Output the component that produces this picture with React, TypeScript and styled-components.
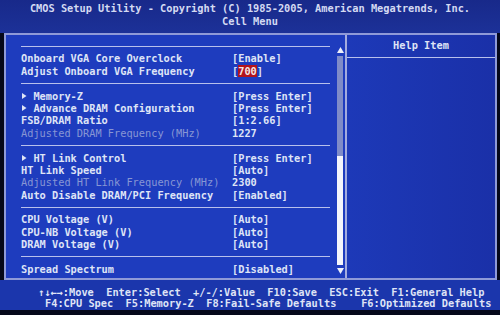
import styled, { createGlobalStyle } from "styled-components";

const GlobalStyle = createGlobalStyle`
  html, body {
    margin: 0;
    padding: 0;
    background: #000;
  }
`;

/**
 * Styles
 */
const Screen = styled.div`
  width: 500px;
  height: 315px;
  display: flex;
  flex-direction: column;
  background: #05081a;
  font-family: "DejaVu Sans Mono", "Liberation Mono", monospace;
  font-size: 10.3px;
  font-weight: bold;
  color: #dfe4f6;
  overflow: hidden;
`;
const Header = styled.div`
  height: 33px;
  box-sizing: border-box;
  padding-top: 2px;
  background: linear-gradient(#18298a, #1c3198);
  display: flex;
  flex-direction: column;
  align-items: center;
  line-height: 13px;
  color: #d4daf2;
  white-space: pre;
`;
const Frame = styled.div`
  height: 247px;
  box-sizing: border-box;
  margin: 0 3px 0 4px;
  border: 2px solid #8f9ad8;
  background: #1e3cbe;
  display: grid;
  grid-template-columns: 341px 1fr;
`;
const Menu = styled.div`
  display: grid;
  grid-template-columns: 1fr 10px;
  column-gap: 5px;
  padding: 5px 0 0 15px;
  border-right: 2px solid #a3acdf;
`;
const Rows = styled.div`
  display: flex;
  flex-direction: column;
`;
const Row = styled.div<{ $dim?: boolean }>`
  height: 12.4px;
  line-height: 12.4px;
  display: grid;
  grid-template-columns: 211px 1fr;
  white-space: pre;
  color: ${(p) => (p.$dim ? "#8796d4" : "#dfe4f6")};
  font-weight: ${(p) => (p.$dim ? "normal" : "bold")};
`;
const Label = styled.span`
  display: flex;
  align-items: center;
`;
const Value = styled.span`
  color: #dfe4f6;
  font-weight: bold;
`;
const Sep = styled.div`
  height: 12.4px;
  display: flex;
  align-items: center;
  &::after {
    content: "";
    flex: 1;
    height: 1px;
    background: #b8c0ec;
  }
`;
const Arrow = styled.svg`
  width: 12.4px;
  height: 6px;
  flex: none;
`;
const Selected = styled.span`
  background: #b3141c;
  color: #f2e6e6;
`;
const Scroll = styled.div`
  display: flex;
  flex-direction: column;
  align-items: center;
  padding: 7px 0 4px;
`;
const Track = styled.div`
  flex: 1;
  width: 6px;
  margin: 3px 0;
  display: flex;
  flex-direction: column;
`;
const TrackPart = styled.div<{ $grow: number; $color: string }>`
  flex: ${(p) => p.$grow};
  background: ${(p) => p.$color};
`;
const Help = styled.div`
  display: flex;
  flex-direction: column;
  background: linear-gradient(90deg, #1d39b8, #1a30a8);
`;
const HelpTitle = styled.div`
  height: 22px;
  line-height: 21px;
  text-align: center;
  border-bottom: 1px solid #b8c0ec;
`;
const Footer = styled.div`
  height: 30px;
  box-sizing: border-box;
  padding-top: 7px;
  background: #1b36ac;
  display: flex;
  flex-direction: column;
  line-height: 11px;
  white-space: pre;
  color: #dfe4f6;
`;
const FooterLine = styled.div<{ $indent: number }>`
  padding-left: ${(p) => p.$indent}px;
`;

const TriUp = () => (
  <svg width="7" height="6" viewBox="0 0 7 6">
    <path d="M3.5 0 L7 6 L0 6 Z" fill="#eef0fa" />
  </svg>
);
const TriDown = () => (
  <svg width="7" height="6" viewBox="0 0 7 6">
    <path d="M0 0 L7 0 L3.5 6 Z" fill="#eef0fa" />
  </svg>
);
const TriRight = () => (
  <Arrow viewBox="0 0 12.4 6">
    <path d="M1 0 L5.5 3 L1 6 Z" fill="#dfe4f6" />
  </Arrow>
);

type Item =
  | { sep: true }
  | { label: string; value?: React.ReactNode; sub?: boolean; dim?: boolean };

const items: Item[] = [
  { sep: true },
  { label: "Onboard VGA Core Overclock", value: "[Enable]" },
  {
    label: "Adjust Onboard VGA Frequency",
    value: (
      <>
        [<Selected>700</Selected>]
      </>
    ),
  },
  { sep: true },
  { label: "Memory-Z", value: "[Press Enter]", sub: true },
  { label: "Advance DRAM Configuration", value: "[Press Enter]", sub: true },
  { label: "FSB/DRAM Ratio", value: "[1:2.66]" },
  { label: "Adjusted DRAM Frequency (MHz)", value: "1227", dim: true },
  { sep: true },
  { label: "HT Link Control", value: "[Press Enter]", sub: true },
  { label: "HT Link Speed", value: "[Auto]" },
  { label: "Adjusted HT Link Frequency (MHz)", value: "2300", dim: true },
  { label: "Auto Disable DRAM/PCI Frequency", value: "[Enabled]" },
  { sep: true },
  { label: "CPU Voltage (V)", value: "[Auto]" },
  { label: "CPU-NB Voltage (V)", value: "[Auto]" },
  { label: "DRAM Voltage (V)", value: "[Auto]" },
  { sep: true },
  { label: "Spread Spectrum", value: "[Disabled]" },
];

export default function App() {
  return (
    <Screen>
      <GlobalStyle />
      <Header>
        <div>CMOS Setup Utility - Copyright (C) 1985-2005, American Megatrends, Inc.</div>
        <div>Cell Menu</div>
      </Header>
      <Frame>
        <Menu>
          <Rows>
            {items.map((it, i) =>
              "sep" in it ? (
                <Sep key={i} />
              ) : (
                <Row key={i} $dim={it.dim}>
                  <Label>
                    {it.sub ? <TriRight /> : null}
                    {it.label}
                  </Label>
                  <Value>{it.value}</Value>
                </Row>
              )
            )}
          </Rows>
          <Scroll>
            <TriUp />
            <Track>
              <TrackPart $grow={100} $color="#7f8cc8" />
              <TrackPart $grow={110} $color="#f4f5fb" />
            </Track>
            <TriDown />
          </Scroll>
        </Menu>
        <Help>
          <HelpTitle>Help Item</HelpTitle>
        </Help>
      </Frame>
      <Footer>
        <FooterLine $indent={38}>
          ↑↓←→:Move  Enter:Select  +/-/:Value  F10:Save  ESC:Exit  F1:General Help
        </FooterLine>
        <FooterLine $indent={45}>
          F4:CPU Spec  F5:Memory-Z  F8:Fail-Safe Defaults    F6:Optimized Defaults
        </FooterLine>
      </Footer>
    </Screen>
  );
}
